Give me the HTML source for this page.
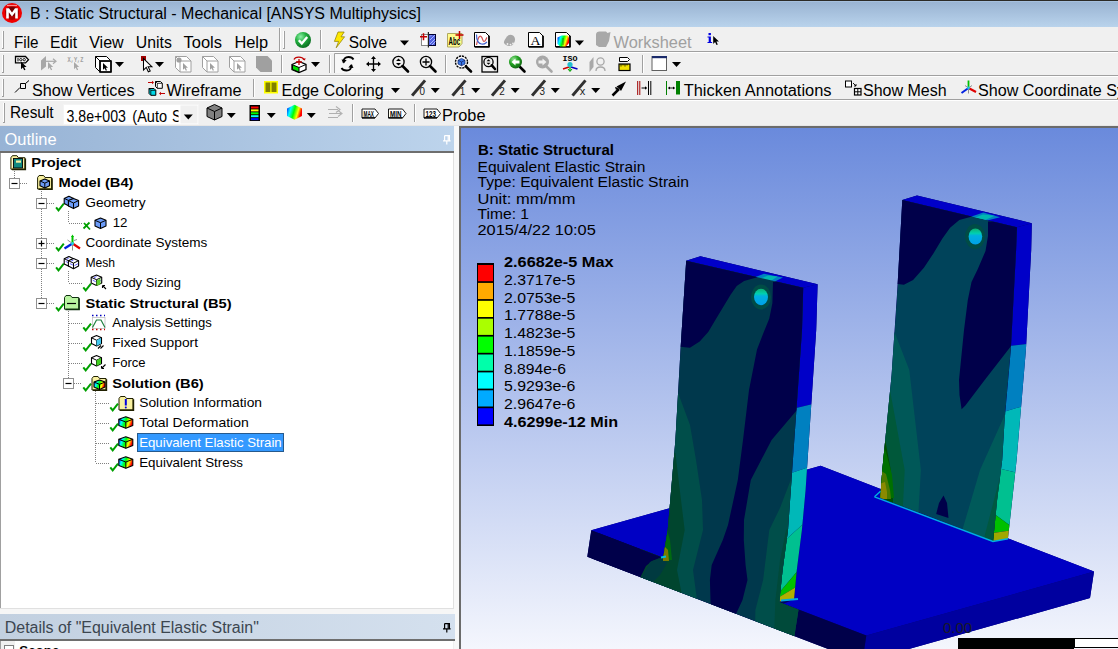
<!DOCTYPE html>
<html><head><meta charset="utf-8"><title>ANSYS Mechanical</title>
<style>html,body{margin:0;padding:0;width:1118px;height:649px;overflow:hidden;background:#f0f0f0}
svg{display:block;font-family:"Liberation Sans", sans-serif}</style></head>
<body><svg width="1118" height="649" viewBox="0 0 1118 649">
<defs>
<linearGradient id="gTitle" x1="0" y1="0" x2="0" y2="1">
 <stop offset="0" stop-color="#97b1d0"/><stop offset="1" stop-color="#b9d3ec"/></linearGradient>
<linearGradient id="gOut" x1="0" y1="0" x2="1" y2="0">
 <stop offset="0" stop-color="#97b3d5"/><stop offset="1" stop-color="#bdd4ec"/></linearGradient>
<linearGradient id="gDet" x1="0" y1="0" x2="1" y2="0">
 <stop offset="0" stop-color="#c2d0e0"/><stop offset="1" stop-color="#d4e0ee"/></linearGradient>
<linearGradient id="gView" x1="0" y1="0" x2="0" y2="1">
 <stop offset="0" stop-color="#6a8adc"/><stop offset="1" stop-color="#f4f6fd"/></linearGradient>
<clipPath id="cView"><rect x="461" y="128" width="657" height="521"/></clipPath>
<clipPath id="cCombo"><rect x="64" y="105" width="114.5" height="19"/></clipPath>
<clipPath id="cRight"><rect x="0" y="0" width="1118" height="649"/></clipPath>
</defs>
<rect x="0" y="0" width="1118" height="649" fill="#f0f0f0"/>
<rect x="0" y="0" width="1118" height="27" fill="url(#gTitle)"/>
<rect x="0" y="0" width="1118" height="1" fill="#2b2a26"/>
<rect x="0" y="1" width="1118" height="1" fill="#a6c0de"/>
<rect x="0" y="51" width="1118" height="1" fill="#a0a0a0"/>
<rect x="0" y="52" width="1118" height="1" fill="#ffffff"/>
<rect x="0" y="75" width="1118" height="1" fill="#a0a0a0"/>
<rect x="0" y="76" width="1118" height="1" fill="#ffffff"/>
<rect x="0" y="99" width="1118" height="1" fill="#a0a0a0"/>
<rect x="0" y="100" width="1118" height="1" fill="#ffffff"/>
<rect x="0" y="125" width="1118" height="1" fill="#e6e6e6"/>
<rect x="2" y="31" width="1" height="17" fill="#ffffff"/>
<rect x="3" y="31" width="1" height="17" fill="#a0a0a0"/>
<rect x="2" y="48" width="2" height="1" fill="#a0a0a0"/>
<rect x="283" y="31" width="1" height="17" fill="#ffffff"/>
<rect x="284" y="31" width="1" height="17" fill="#a0a0a0"/>
<rect x="283" y="48" width="2" height="1" fill="#a0a0a0"/>
<rect x="2" y="55" width="1" height="17" fill="#ffffff"/>
<rect x="3" y="55" width="1" height="17" fill="#a0a0a0"/>
<rect x="2" y="72" width="2" height="1" fill="#a0a0a0"/>
<rect x="281" y="55" width="1" height="17" fill="#ffffff"/>
<rect x="282" y="55" width="1" height="17" fill="#a0a0a0"/>
<rect x="281" y="72" width="2" height="1" fill="#a0a0a0"/>
<rect x="2" y="79" width="1" height="17" fill="#ffffff"/>
<rect x="3" y="79" width="1" height="17" fill="#a0a0a0"/>
<rect x="2" y="96" width="2" height="1" fill="#a0a0a0"/>
<rect x="3" y="103" width="1" height="19" fill="#ffffff"/>
<rect x="4" y="103" width="1" height="19" fill="#a0a0a0"/>
<rect x="3" y="122" width="2" height="1" fill="#a0a0a0"/>
<rect x="279" y="28" width="1" height="23" fill="#a0a0a0"/>
<rect x="280" y="28" width="1" height="23" fill="#ffffff"/>
<rect x="320" y="30" width="1" height="19" fill="#a0a0a0"/>
<rect x="321" y="30" width="1" height="19" fill="#ffffff"/>
<rect x="281" y="55" width="1" height="18" fill="#a0a0a0"/>
<rect x="282" y="55" width="1" height="18" fill="#ffffff"/>
<rect x="329" y="55" width="1" height="18" fill="#a0a0a0"/>
<rect x="330" y="55" width="1" height="18" fill="#ffffff"/>
<rect x="445" y="55" width="1" height="18" fill="#a0a0a0"/>
<rect x="446" y="55" width="1" height="18" fill="#ffffff"/>
<rect x="642" y="55" width="1" height="18" fill="#a0a0a0"/>
<rect x="643" y="55" width="1" height="18" fill="#ffffff"/>
<rect x="253" y="79" width="1" height="18" fill="#a0a0a0"/>
<rect x="254" y="79" width="1" height="18" fill="#ffffff"/>
<rect x="352" y="104" width="1" height="18" fill="#a0a0a0"/>
<rect x="353" y="104" width="1" height="18" fill="#ffffff"/>
<rect x="414" y="104" width="1" height="18" fill="#a0a0a0"/>
<rect x="415" y="104" width="1" height="18" fill="#ffffff"/>
<rect x="63.5" y="104.5" width="135" height="20" fill="#ffffff" stroke="#f4f4f4"/>
<rect x="180.5" y="105.5" width="17" height="18" fill="#f0f0f0"/>
<rect x="0" y="126" width="455" height="25" fill="url(#gOut)"/>
<rect x="0" y="151" width="455" height="2" fill="#6e6e6e"/>
<rect x="1" y="153" width="452" height="455" fill="#ffffff"/>
<rect x="0" y="153" width="1" height="456" fill="#a0a0a0"/>
<rect x="453" y="153" width="1" height="456" fill="#e0e0e0"/>
<rect x="0" y="608" width="454" height="1" fill="#e0e0e0"/><rect x="0" y="609" width="455" height="5" fill="#f6f6f6"/>
<rect x="454" y="126" width="5" height="523" fill="#f8f8f8"/>
<rect x="0" y="614" width="455" height="25" fill="url(#gDet)"/>
<rect x="0" y="639" width="455" height="2" fill="#6e6e6e"/>
<rect x="1" y="641" width="452" height="8" fill="#ffffff"/>
<rect x="0" y="641" width="1" height="8" fill="#a0a0a0"/>
<rect x="1" y="641" width="14" height="8" fill="#f0f0f0"/>
<rect x="4.5" y="645.5" width="9" height="9" fill="#fff" stroke="#808080"/>
<rect x="137" y="433" width="147" height="19" fill="#3399ff"/>
<rect x="137.5" y="433.5" width="146" height="18" fill="none" stroke="#1a1a1a" stroke-width="1" stroke-dasharray="1 1"/>
<rect x="459" y="126" width="659" height="523" fill="#6b6b6b"/>
<rect x="461" y="128" width="657" height="521" fill="url(#gView)"/>
<g clip-path="url(#cView)">
<polygon points="591.3,530.2 820.6,465.8 1094.0,571.6 1090.0,598.1 862.3,662.1 587.3,556.7" fill="#00007a"/>
<polygon points="591.3,530.2 820.6,465.8 1094.0,571.6 866.3,635.6" fill="#0000c4"/>
<polygon points="866.3,635.6 1094.0,571.6 1090.0,598.1 862.3,662.1" fill="#00009f"/>
<polygon points="591.3,530.2 866.3,635.6 862.3,662.1 587.3,556.7" fill="#00004a"/>
<defs><clipPath id="cLU"><polygon points="686.2,260.8 803.2,287.7 802.0,330.0 790.8,490.0 788.0,530.0 782.6,570.0 779.0,605.5 662.6,561.0 667.7,530.0 672.0,480.0 675.4,440.0 680.8,345.0"/><polygon points="591.3,530.2 866.3,635.6 862.3,662.1 587.3,556.7"/></clipPath>
<clipPath id="cRU"><polygon points="902.3,200.0 1017.0,227.3 1016.1,250.0 1012.9,310.0 1010.8,350.0 1004.6,420.0 1002.2,460.0 997.1,500.0 993.1,540.9 880.3,497.8 882.3,470.0 891.6,375.0 897.3,290.0"/></clipPath>
<linearGradient id="gHole" x1="0" y1="0" x2="0" y2="1"><stop offset="0" stop-color="#10b070"/><stop offset="0.3" stop-color="#00d0b0"/><stop offset="0.45" stop-color="#00b0e0"/><stop offset="1" stop-color="#00a0e8"/></linearGradient></defs>
<polygon points="686.2,260.8 700.4,256.2 817.6,284.2 816.2,330.0 805.6,490.0 801.9,530.0 796.8,570.0 794.0,599.5 779.0,605.5 662.6,561.0 667.7,530.0 672.0,480.0 675.4,440.0 680.8,345.0" fill="#000060"/>
<polygon points="686.2,260.8 700.4,256.2 817.6,284.2 803.2,287.7" fill="#0000c8"/>
<polygon points="754.2,277.6 764.0,273.8 783.0,277.4 772.7,282.4" fill="#0080c0"/>
<polygon points="760.4,278.6 768.0,275.6 777.5,276.4 770.0,281.4" fill="#00b8b0"/>
<defs><clipPath id="cLR"><polygon points="803.2,287.7 817.6,284.2 816.2,330.0 805.6,490.0 801.9,530.0 796.8,570.0 794.0,599.5 779.2,601.5 782.6,570.0 788.0,530.0 790.8,490.0 802.0,330.0"/></clipPath></defs>
<g clip-path="url(#cLR)">
<polygon points="770.0,270.0 830.0,270.0 830.0,399.8 770.0,414.2" fill="#0000c8"/>
<polygon points="770.0,414.2 830.0,399.8 830.0,460.0 770.0,480.0" fill="#0080c0"/>
<polygon points="770.0,480.0 830.0,460.0 830.0,499.7 770.0,553.8" fill="#00b8b8"/>
<polygon points="770.0,553.8 830.0,499.7 830.0,532.2 770.0,603.8" fill="#00c090"/>
<polygon points="770.0,603.8 830.0,532.2 830.0,566.7 770.0,602.6" fill="#00c000"/>
<polygon points="770.0,602.6 830.0,566.7 830.0,620.0 770.0,620.0" fill="#b0b000"/>
</g>
<g clip-path="url(#cLU)">
<polygon points="686.0,255.0 810.0,285.0 788.0,600.0 786.0,690.0 652.0,690.0 640.0,580.0 646.0,565.0 663.0,557.0" fill="#00384c"/>
<polygon points="680.0,255.0 762.0,275.0 756.4,277.4 744.1,281.1 736.7,286.0 730.6,294.7 723.2,307.0 715.8,319.3 708.4,331.7 699.7,341.5 689.9,347.7 682.5,347.0 660.0,345.0 660.0,255.0" fill="#00004a"/>
<polygon points="773.0,282.0 820.0,282.0 820.0,410.0 797.0,410.0 771.6,440.0 750.8,480.0 744.0,520.0 743.8,540.0 745.6,565.0 747.5,580.0 742.5,600.0 736.0,614.0 736.0,690.0 710.0,690.0 711.0,612.0 710.5,600.0 709.9,580.0 711.7,565.0 722.8,540.0 728.0,525.0 737.8,480.0 743.0,440.0 749.0,390.0 757.0,349.4 763.0,334.0 769.3,318.5 772.4,303.0" fill="#00004a"/>
<polygon points="640.0,380.0 678.5,394.0 690.0,425.0 696.0,460.0 702.0,500.0 703.0,530.0 693.0,570.0 697.0,600.0 695.0,690.0 640.0,690.0" fill="#004e4a"/>
<polygon points="640.0,440.0 675.4,453.0 681.0,500.0 684.7,530.0 677.0,570.0 683.0,600.0 680.0,690.0 640.0,690.0" fill="#00452e"/>
<polygon points="600.0,530.0 663.0,557.0 652.0,561.0 646.0,566.0 641.0,576.0 638.0,600.0 580.0,600.0" fill="#00004a"/>
<polygon points="650.0,562.0 662.0,557.0 667.0,563.0 660.0,575.0 652.0,583.0 646.0,590.0 640.0,580.0" fill="#003a40"/>
<polygon points="800.0,462.0 792.4,475.4 780.0,508.0 769.3,530.0 763.1,580.0 755.4,610.0 754.0,690.0 786.0,690.0 800.0,600.0" fill="#004e4a"/>
<polygon points="800.0,520.0 786.0,530.0 780.0,560.0 775.4,600.0 772.0,690.0 786.0,690.0 800.0,600.0" fill="#004a3a"/>
<polygon points="664.0,520.0 670.0,540.0 672.0,560.0 663.0,560.0" fill="#006a10"/>
<polygon points="663.0,545.0 668.0,550.0 669.0,561.0 663.0,561.0" fill="#7a7a00"/>
</g>
<ellipse cx="761" cy="297" rx="10" ry="12.5" fill="#004c46"/>
<ellipse cx="761" cy="297" rx="7" ry="8.3" fill="url(#gHole)"/>
<path d="M781 600.5l17-1.5" stroke="#00a8e0" stroke-width="2.2"/>
<path d="M661 557.5l5-1" stroke="#00c0e0" stroke-width="2"/>
<polygon points="902.3,200.0 917.0,195.4 1031.8,223.2 1031.2,250.0 1028.0,310.0 1025.9,350.0 1020.0,420.0 1016.6,460.0 1012.2,500.0 1007.9,539.0 993.1,540.9 880.3,497.8 882.3,470.0 891.6,375.0 897.3,290.0" fill="#000060"/>
<polygon points="902.3,200.0 917.0,195.4 1031.8,223.2 1017.0,227.3" fill="#0000c8"/>
<polygon points="969.2,217.2 983.4,212.6 1000.1,217.2 987.2,220.6" fill="#0080c0"/>
<polygon points="974.9,217.7 982.9,214.5 994.7,215.8 985.1,220.0" fill="#00b8b0"/>
<defs><clipPath id="cRR"><polygon points="1031.8,223.2 1031.2,250.0 1028.0,310.0 1025.9,350.0 1020.0,420.0 1016.6,460.0 1012.2,500.0 1007.9,539.0 993.1,540.9 997.1,500.0 1002.2,460.0 1004.6,420.0 1010.8,350.0 1012.9,310.0 1016.1,250.0 1017.0,227.3"/></clipPath></defs>
<g clip-path="url(#cRR)">
<polygon points="980.0,210.0 1040.0,210.0 1040.0,342.3 980.0,349.5" fill="#0000c8"/>
<polygon points="980.0,349.5 1040.0,342.3 1040.0,401.0 980.0,419.0" fill="#0080c0"/>
<polygon points="980.0,419.0 1040.0,401.0 1040.0,478.2 980.0,463.8" fill="#00b8b8"/>
<polygon points="980.0,463.8 1040.0,478.2 1040.0,547.4 980.0,503.6" fill="#00c090"/>
<polygon points="980.0,503.6 1015.9,529.8 980.0,534.8" fill="#00c000"/>
<polygon points="980.0,534.8 1040.0,526.4 1040.0,560.0 980.0,560.0" fill="#a0a800"/>
</g>
<g clip-path="url(#cRU)">
<polygon points="902.3,200.0 1017.0,227.3 1016.1,250.0 1012.9,310.0 1010.8,350.0 1004.6,420.0 1002.2,460.0 997.1,500.0 993.1,540.9 880.3,497.8 882.3,470.0 891.6,375.0 897.3,290.0" fill="#00435a"/>
<polygon points="895.0,190.0 980.0,214.0 973.2,216.2 959.3,220.0 950.1,227.7 942.4,238.5 933.1,253.9 923.9,267.8 913.1,280.1 903.9,284.7 897.7,284.0 880.0,284.0 880.0,190.0" fill="#00004a"/>
<polygon points="988.0,221.6 1030.0,221.0 1030.0,346.3 1010.9,346.3 984.7,380.0 965.4,405.4 961.6,409.3 959.5,395.0 959.0,380.0 964.0,330.0 967.8,300.0 971.5,282.0 977.8,269.0 985.5,251.0 988.0,236.0" fill="#00004a"/>
<polygon points="870.0,320.0 894.7,332.4 909.3,370.0 920.9,470.0 918.6,510.0 920.0,560.0 870.0,560.0" fill="#005858"/>
<polygon points="870.0,380.0 890.0,390.0 904.7,470.0 903.0,505.0 905.0,560.0 870.0,560.0" fill="#00583a"/>
<polygon points="870.0,430.0 885.4,440.9 890.8,470.0 893.0,500.0 893.0,560.0 870.0,560.0" fill="#005000"/>
<polygon points="880.0,440.0 886.0,452.0 892.0,475.0 894.0,498.0 880.0,498.0" fill="#007000"/>
<polygon points="880.0,470.0 886.0,474.0 890.0,490.0 891.0,499.0 880.0,499.0" fill="#4a7a00"/>
<polygon points="879.0,484.0 885.0,482.0 887.0,492.0 887.0,499.0 879.0,499.0" fill="#8a8a00"/>
<polygon points="1010.0,400.0 1006.3,411.6 980.0,470.0 963.0,527.8 960.0,560.0 1010.0,560.0" fill="#005a5a"/>
<polygon points="1010.0,470.0 1000.0,477.0 984.7,535.5 982.0,560.0 1010.0,560.0" fill="#005840"/>
<polygon points="996.0,515.0 1003.0,505.0 1000.0,545.0 992.0,545.0" fill="#006000"/>
<polygon points="943.5,495.5 947.0,503.0 948.5,518.0 936.2,514.0 939.0,503.0" fill="#00004a"/>
</g>
<ellipse cx="975" cy="236.5" rx="10" ry="12.5" fill="#004c46"/>
<ellipse cx="975.4" cy="236.5" rx="6.8" ry="8" fill="url(#gHole)"/>
<path d="M874.5 496.8L993 541.5l15-2.8" fill="none" stroke="#00b0e0" stroke-width="1.4"/>
<path d="M874.5 496.8l6-5.5" fill="none" stroke="#00b0e0" stroke-width="1.4"/>
</g>
<rect x="477" y="263" width="17" height="163" fill="#000"/>
<rect x="478" y="265.0" width="15" height="16.2" fill="#ff0000"/>
<rect x="478" y="282.9" width="15" height="16.2" fill="#ffaa00"/>
<rect x="478" y="300.8" width="15" height="16.2" fill="#ffff00"/>
<rect x="478" y="318.7" width="15" height="16.2" fill="#aaff00"/>
<rect x="478" y="336.6" width="15" height="16.2" fill="#00ff00"/>
<rect x="478" y="354.5" width="15" height="16.2" fill="#00ffaa"/>
<rect x="478" y="372.4" width="15" height="16.2" fill="#00ffff"/>
<rect x="478" y="390.3" width="15" height="16.2" fill="#00aaff"/>
<rect x="478" y="408.2" width="15" height="16.2" fill="#0000ff"/>
<rect x="958" y="638" width="116" height="11" fill="#000"/>
<rect x="1074.5" y="638.5" width="44" height="9" fill="#fff" stroke="#000"/>
<defs><radialGradient id="gM" cx="0.4" cy="0.35" r="0.7"><stop offset="0" stop-color="#ff5050"/><stop offset="0.6" stop-color="#e00000"/><stop offset="1" stop-color="#800000"/></radialGradient><radialGradient id="gChk" cx="0.35" cy="0.3" r="0.75"><stop offset="0" stop-color="#8ef0a8"/><stop offset="0.45" stop-color="#22b040"/><stop offset="1" stop-color="#0a6a20"/></radialGradient><radialGradient id="gBk" cx="0.35" cy="0.3" r="0.75"><stop offset="0" stop-color="#90e090"/><stop offset="0.5" stop-color="#20a020"/><stop offset="1" stop-color="#106010"/></radialGradient><linearGradient id="gRain" x1="0" y1="0" x2="1" y2="0.3"><stop offset="0" stop-color="#0000ff"/><stop offset="0.3" stop-color="#00ffff"/><stop offset="0.55" stop-color="#00ff00"/><stop offset="0.8" stop-color="#ffff00"/><stop offset="1" stop-color="#ff0000"/></linearGradient></defs>
<circle cx="12" cy="13" r="10" fill="#f00000"/><circle cx="12" cy="13" r="7" fill="#b00000"/><ellipse cx="12" cy="11.5" rx="6.5" ry="4.5" fill="#400000" opacity="0.55"/><path d="M7 5.5h10" stroke="#ffb0b0" stroke-width="1.2" opacity="0.8"/>
<path d="M6.2 18.5V8.2h2.8l3 4.2l3-4.2h2.8v10.3h-2.6v-6.2l-3.2 4.3l-3.2-4.3v6.2z" fill="#fff"/>
<circle cx="303" cy="40" r="8" fill="url(#gChk)"/>
<path d="M298.8 40.2l3 3.2l5.4-6.4" fill="none" stroke="#fff" stroke-width="2.4"/>
<path d="M338 32h6.2l-3.2 4.8h3.6l-8.4 11l2.4-6.4h-4.2z" fill="#ffe800" stroke="#8a7a00" stroke-width="0.7"/>
<path d="M400 40.5h9l-4.5 5z" fill="#000"/>
<rect x="421.5" y="34.5" width="7" height="11" fill="#fff" stroke="#888" stroke-width="1"/>
<rect x="428.5" y="34.5" width="7" height="11" fill="#5060e0" stroke="#000030" stroke-width="1"/>
<path d="M430 44l5-5M430 40l5-5M432 45l3.5-3.5M430 36.5l1.5-1.5" stroke="#a8b8ff" stroke-width="1"/>
<rect x="427.8" y="32" width="1.2" height="15.5" fill="#222"/>
<path d="M420 36.8h7M423.5 33.3v7" stroke="#c00000" stroke-width="1.5"/>
<path d="M447.5 33.5h14.5v10l-3 3.5h-11.5z" fill="#fffc8c" stroke="#b0a860" stroke-width="1"/>
<text x="448.6" y="45" font-size="11.5" font-weight="bold" fill="#000" textLength="11.5" lengthAdjust="spacingAndGlyphs">Abc</text>
<path d="M455.5 35h8M459.5 31v8" stroke="#c00000" stroke-width="1.5"/>
<path d="M474.5 32.5h11l3.5 3.5v11h-14.5z" fill="#fff" stroke="#000" stroke-width="1"/>
<path d="M475 46.8h14v-11" fill="none" stroke="#000" stroke-width="1.6"/>
<path d="M476.5 45c1-5 2.5-10 4.5-8.5s1.5 5 3 5s2-3 3-4" fill="none" stroke="#d05050" stroke-width="1.2"/>
<path d="M476.5 34.5c0 6 2 9 5 9.5s3.5-0.5 5.5-2" fill="none" stroke="#4060d0" stroke-width="1.2"/>
<path d="M507 36.5c1.5-2 4-2.5 6-1s2.5 4 1.5 6.5s-2.5 4-5 4s-5-1.5-5.5-3s1.5-4.5 3-6.5z" fill="#a8a8a8"/>
<circle cx="507.5" cy="44" r="0.9" fill="#f0f0f0"/><circle cx="510.5" cy="44.6" r="0.9" fill="#f0f0f0"/><circle cx="513" cy="43.5" r="0.9" fill="#f0f0f0"/>
<path d="M528.5 32.5h11l3.5 3.5v11h-14.5z" fill="#fff" stroke="#000" stroke-width="1"/>
<path d="M529 46.8h14v-11" fill="none" stroke="#000" stroke-width="1.6"/>
<text x="530.5" y="44.5" font-size="12" font-family="Liberation Serif, serif" fill="#000" textLength="10" lengthAdjust="spacingAndGlyphs">A</text>
<path d="M555.5 32.5h11l3.5 3.5v11h-14.5z" fill="#fff" stroke="#000" stroke-width="1"/>
<path d="M556 46.8h14v-11" fill="none" stroke="#000" stroke-width="1.6"/>
<path d="M557.5 37.5l4-2h6.5l1 2.5v5l-3 3.5h-6l-2.5-2.5z" fill="url(#gRain)"/>
<path d="M563 38v7" stroke="#333" stroke-width="0.6"/>
<path d="M575 40.5h9l-4.5 5z" fill="#000"/>
<path d="M596 34.5c0-2 1.5-3 3.5-3h6.5l1.5 1.5l3-1l-1.5 9l-3 6h-7l-3-2z" fill="#a8a8a8"/>
<rect x="708.5" y="33" width="2.4" height="2.2" fill="#0000e0"/><path d="M707.5 36.5h3.4v5.5h1.2v1h-4.6v-1h1.2v-4.5h-1.2z" fill="#0000e0"/>
<path transform="translate(713.2 36) scale(0.72)" d="M0 0V11L2.6 8.4L4.6 12.6L6.4 11.8L4.4 7.8H8Z" fill="#000"/>
<path d="M15.5 56.5h10l3 3.2l-3 3.2h-10z" fill="#fff" stroke="#000" stroke-width="1.3"/>
<path d="M18 58v3.4" stroke="#000" stroke-width="1"/><circle cx="20.8" cy="59.7" r="1.2" fill="none" stroke="#000" stroke-width="0.9"/><circle cx="24.2" cy="59.7" r="1.2" fill="none" stroke="#000" stroke-width="0.9"/>
<path transform="translate(21 61.5) scale(0.7)" d="M0 0V11L2.6 8.4L4.6 12.6L6.4 11.8L4.4 7.8H8Z" fill="#000"/>
<path d="M41 60.5l5-4.5v10.5l-5 4z" fill="#a8a8a8"/>
<path d="M46 61.3h9" stroke="#a8a8a8" stroke-width="1.2"/><path d="M53 58.8l3 2.5l-3 2.5" fill="none" stroke="#a8a8a8" stroke-width="1.2"/>
<path transform="translate(48 62) scale(0.65)" d="M0 0V11L2.6 8.4L4.6 12.6L6.4 11.8L4.4 7.8H8Z" fill="#a8a8a8"/>
<text x="67.5" y="61.8" font-size="7.5" font-weight="bold" font-family="Liberation Mono, monospace" fill="#a0a0a0" textLength="16" lengthAdjust="spacingAndGlyphs">X,Y,Z</text>
<path transform="translate(74 62) scale(0.65)" d="M0 0V11L2.6 8.4L4.6 12.6L6.4 11.8L4.4 7.8H8Z" fill="#a8a8a8"/>
<path d="M95.5 56.5h11l4.5 4.5v11h-11l-4.5-4.5z" fill="#fff" stroke="#000" stroke-width="1"/><path d="M95.5 56.5l4.5 4.5h11M100 61v11" fill="none" stroke="#000" stroke-width="1"/><path d="M100 61h11v11h-11z" fill="none" stroke="#000" stroke-width="1.6"/>
<path transform="translate(103 63) scale(0.62)" d="M0 0V11L2.6 8.4L4.6 12.6L6.4 11.8L4.4 7.8H8Z" fill="#000"/>
<path d="M115 62h9l-4.5 5z" fill="#000"/>
<rect x="141" y="56" width="5" height="5" fill="#a00000"/>
<path transform="translate(143.5 58.5) scale(1.05)" d="M0 0V11L2.6 8.4L4.6 12.6L6.4 11.8L4.4 7.8H8Z" fill="#fff" stroke="#000" stroke-width="1"/>
<path d="M155 62h9l-4.5 5z" fill="#000"/>
<path d="M175.5 56.5h11l4.5 4.5v11h-11l-4.5-4.5z" fill="#fff" stroke="#a0a0a0" stroke-width="1"/><path d="M175.5 56.5l4.5 4.5h11M180 61v11" fill="none" stroke="#a0a0a0" stroke-width="1"/><circle cx="179" cy="60" r="2.6" fill="#a0a0a0"/>
<path transform="translate(183 63) scale(0.62)" d="M0 0V11L2.6 8.4L4.6 12.6L6.4 11.8L4.4 7.8H8Z" fill="#a0a0a0"/>
<path d="M202.5 56.5h3l4.5 4.5h-3z" fill="#a0a0a0"/><path d="M202.5 56.5h11l4.5 4.5v11h-11l-4.5-4.5z" fill="#fff" stroke="#a0a0a0" stroke-width="1"/><path d="M202.5 56.5l4.5 4.5h11M207 61v11" fill="none" stroke="#a0a0a0" stroke-width="1"/>
<path transform="translate(210 63) scale(0.62)" d="M0 0V11L2.6 8.4L4.6 12.6L6.4 11.8L4.4 7.8H8Z" fill="#a0a0a0"/>
<path d="M229.5 56.5h11l4.5 4.5h-11z" fill="#a0a0a0"/><path d="M229.5 56.5h11l4.5 4.5v11h-11l-4.5-4.5z" fill="#fff" stroke="#a0a0a0" stroke-width="1"/><path d="M229.5 56.5l4.5 4.5h11M234 61v11" fill="none" stroke="#a0a0a0" stroke-width="1"/>
<path transform="translate(237 63) scale(0.62)" d="M0 0V11L2.6 8.4L4.6 12.6L6.4 11.8L4.4 7.8H8Z" fill="#a0a0a0"/>
<path d="M256 56h11.5l4.5 4.5v11.5h-11.5l-4.5-4.5z" fill="#a0a0a0"/>
<path d="M292 64.5l7-3l7 3v5l-7 3l-7-3z" fill="#fff" stroke="#000" stroke-width="1.3"/>
<path d="M292.5 64.8l6.5 2.7v4.6l-6.5-2.7z" fill="#00e000" stroke="#000" stroke-width="1"/>
<path d="M299 67.5l7-3" stroke="#000" stroke-width="1"/>
<path d="M294 59.5c1-3 8-3.5 10 0" fill="none" stroke="#c00000" stroke-width="1.2"/><path d="M302.5 59.5l2.5 1l0.5-2.5z" fill="#c00000"/>
<path d="M296 62h6M299 59v6" stroke="#c00000" stroke-width="1.3"/>
<path d="M311 62h9l-4.5 5z" fill="#000"/>
<rect x="334" y="53" width="26" height="20" fill="#f7f7f7"/>
<path d="M334.5 73V53.5H360" fill="none" stroke="#a0a0a0" stroke-width="1"/>
<path d="M343.5 62.5c-0.5-3.5 2-5.5 5-5.5s4.5 1.5 5 2.5" fill="none" stroke="#000" stroke-width="1.8"/><path d="M341.5 59.5l2.2 4l3-3.5z" fill="#000"/>
<path d="M351.5 65c0.5 3.5-2 5.5-5 5.5s-4.5-1.5-5-2.5" fill="none" stroke="#000" stroke-width="1.8"/><path d="M353.5 68l-2.2-4l-3 3.5z" fill="#000"/>
<path d="M373.5 57.5v13M367 64h13" stroke="#000" stroke-width="1.3"/>
<path d="M373.5 56l-2.5 3h5zM373.5 72l-2.5-3h5zM366 64l3-2.5v5zM381 64l-3-2.5v5z" fill="#000"/>
<circle cx="398.5" cy="62" r="5.6" fill="none" stroke="#000" stroke-width="1.3"/>
<line x1="402.532" y1="66.032" x2="408" y2="71.5" stroke="#000" stroke-width="2.6" stroke-linecap="round"/>
<path d="M398.5 58.5l-2.5 2.5h5zM398.5 65.5l-2.5-2.5h5z" fill="#000"/>
<circle cx="426" cy="62" r="5.6" fill="none" stroke="#000" stroke-width="1.3"/>
<line x1="430.032" y1="66.032" x2="435.5" y2="71.5" stroke="#000" stroke-width="2.6" stroke-linecap="round"/>
<path d="M426 58.5v7M422.5 62h7" stroke="#000" stroke-width="1.3"/>
<circle cx="461.5" cy="62" r="6" fill="#fff" stroke="#000" stroke-width="1.4" stroke-dasharray="2.2 0.9"/>
<line x1="465.8" y1="66.3" x2="471" y2="71.5" stroke="#000" stroke-width="2.6" stroke-linecap="round"/>
<path d="M458 60.2l3.5-1.8l3.5 1.8v3.8l-3.5 1.8l-3.5-1.8z" fill="#3a78e8" stroke="#102060" stroke-width="0.7"/><path d="M458 60.2l3.5 1.8l3.5-1.8M461.5 62v3.8" fill="none" stroke="#102060" stroke-width="0.7"/>
<rect x="482" y="56.5" width="15.5" height="15.5" fill="none" stroke="#000" stroke-width="1.3"/>
<circle cx="488.5" cy="62" r="4.6" fill="none" stroke="#000" stroke-width="1.3"/>
<line x1="491.812" y1="65.312" x2="495" y2="69" stroke="#000" stroke-width="2.6" stroke-linecap="round"/>
<path d="M488.5 59.2l-2 2h4zM488.5 64.8l-2-2h4z" fill="#000"/>
<line x1="520" y1="67" x2="524.5" y2="71.5" stroke="#000" stroke-width="2.6" stroke-linecap="round"/>
<circle cx="515.5" cy="62" r="6.5" fill="url(#gBk)"/>
<path d="M511.5 62l4-3.5v2h4v3h-4v2z" fill="#fff"/>
<line x1="547" y1="67" x2="551.5" y2="71.5" stroke="#a8a8a8" stroke-width="2.6" stroke-linecap="round"/>
<circle cx="542.5" cy="62" r="6.5" fill="#a8a8a8"/>
<path d="M546.5 62l-4-3.5v2h-4v3h4v2z" fill="#f0f0f0"/>
<text x="562.5" y="61" font-size="7" font-weight="bold" font-family="Liberation Mono, monospace" fill="#000" textLength="15" lengthAdjust="spacingAndGlyphs">ISO</text>
<path d="M570 65v6" stroke="#00a000" stroke-width="1.2"/><path d="M568 69l2 2.5l2-2.5" fill="none" stroke="#00a000" stroke-width="1"/>
<path d="M563 69l6-2" stroke="#d00000" stroke-width="1.5"/><path d="M571 67l6.5 2" stroke="#0000c0" stroke-width="1.5"/>
<circle cx="570" cy="64.5" r="2.6" fill="#20c0d0"/>
<path d="M589.5 62l4-5v10l-4 5z" fill="#a8a8a8"/>
<circle cx="600.5" cy="61.5" r="3.6" fill="none" stroke="#a8a8a8" stroke-width="1.3"/><path d="M596 71c0-3 2-4 4.5-4s4.5 1 4.5 4" fill="none" stroke="#a8a8a8" stroke-width="1.3"/>
<path d="M619.5 57.5h8l2 2l-2 2h-8z" fill="#fff" stroke="#000" stroke-width="1"/>
<rect x="619" y="64" width="11" height="6.5" fill="#f0e000" stroke="#000" stroke-width="1.2"/>
<path d="M621 64v2.5M623 64v1.5M625 64v2.5M627 64v1.5" stroke="#000" stroke-width="0.8"/>
<rect x="652" y="56.5" width="14.5" height="14" fill="#fff" stroke="#606060" stroke-width="1"/>
<rect x="652" y="56" width="15" height="2.2" fill="#1a2a6a"/>
<path d="M672 62h9l-4.5 5z" fill="#000"/>
<path d="M15 92.5l5-5M20.5 83.5h5v5h-5zM25.5 83.5l3.5-3" fill="none" stroke="#000" stroke-width="1"/>
<path d="M155.5 81.5h5l1.8 1.8v5h-5l-1.8-1.8z" fill="#fff" stroke="#000" stroke-width="1"/><path d="M155.5 81.5l1.8 1.8h5M157.3 83.3v5" fill="none" stroke="#000" stroke-width="0.8"/>
<path d="M149 88.5h5l1.8 1.8v5h-5l-1.8-1.8z" fill="#00d8e8" stroke="#000" stroke-width="1"/><path d="M149 88.5l1.8 1.8h5M150.8 90.3v5" fill="none" stroke="#000" stroke-width="0.8"/>
<path d="M148 82.5h5M160 93.5h5" stroke="#c00000" stroke-width="1"/><path d="M152 80.8l2 1.7l-2 1.7zM161 91.8l-2 1.7l2 1.7z" fill="#c00000"/>
<rect x="264" y="81" width="14" height="12.5" fill="#ffff00"/><rect x="265.5" y="82.5" width="4.8" height="9.5" fill="#808000"/><rect x="271.5" y="82.5" width="5" height="9.5" fill="#808000"/>
<path d="M391 88h9l-4.5 5z" fill="#000"/>
<path d="M413.1 94.5L424.1 81.5" stroke="#303030" stroke-width="3" stroke-linecap="square"/>
<text x="419.40000000000003" y="95" font-size="10.5" fill="#202020" textLength="5.5" lengthAdjust="spacingAndGlyphs">0</text>
<path d="M430.8 88h9l-4.5 5z" fill="#000"/>
<path d="M453.5 94.5L464.5 81.5" stroke="#303030" stroke-width="3" stroke-linecap="square"/>
<text x="459.8" y="95" font-size="10.5" fill="#202020" textLength="5.5" lengthAdjust="spacingAndGlyphs">1</text>
<path d="M471.2 88h9l-4.5 5z" fill="#000"/>
<path d="M493.0 94.5L504.0 81.5" stroke="#303030" stroke-width="3" stroke-linecap="square"/>
<text x="499.3" y="95" font-size="10.5" fill="#202020" textLength="5.5" lengthAdjust="spacingAndGlyphs">2</text>
<path d="M510.7 88h9l-4.5 5z" fill="#000"/>
<path d="M533.1 94.5L544.1 81.5" stroke="#303030" stroke-width="3" stroke-linecap="square"/>
<text x="539.4" y="95" font-size="10.5" fill="#202020" textLength="5.5" lengthAdjust="spacingAndGlyphs">3</text>
<path d="M550.8000000000001 88h9l-4.5 5z" fill="#000"/>
<path d="M573.5 94.5L584.5 81.5" stroke="#303030" stroke-width="3" stroke-linecap="square"/>
<text x="579.8" y="95" font-size="10.5" fill="#202020" textLength="5.5" lengthAdjust="spacingAndGlyphs">x</text>
<path d="M591.2 88h9l-4.5 5z" fill="#000"/>
<path d="M612.5 95.5l6.5-6.5" stroke="#000" stroke-width="2.5"/><path d="M616.5 86.5l9.5-5l-5 9.5l-2-2.5z" fill="#000"/><path d="M616 90l-1-3l4 1z" fill="#000"/>
<path d="M637.7 81v14M639.8 81v14" stroke="#a00000" stroke-width="1"/><path d="M648.5 81v14M650.8 81v14" stroke="#000" stroke-width="1"/>
<path d="M641.5 88h5" stroke="#000" stroke-width="1"/><path d="M645 86.3l2 1.7l-2 1.7z" fill="#000"/>
<path d="M666.5 81v14" stroke="#008000" stroke-width="1"/><rect x="676" y="81" width="4" height="13.5" fill="#008000"/>
<path d="M668.5 88h6" stroke="#000" stroke-width="0.9"/><path d="M668 88l2-1.6v3.2zM675 88l-2-1.6v3.2z" fill="#000"/>
<rect x="845.5" y="81" width="6" height="6" fill="#fff" stroke="#000" stroke-width="1"/><path d="M853 83l3 3M856 84v2h-2" fill="none" stroke="#000" stroke-width="0.9"/>
<rect x="854.5" y="88.5" width="6.5" height="6.5" fill="#fff" stroke="#000" stroke-width="1.2"/><path d="M857.8 88.5v6.5M854.5 91.8h6.5" stroke="#000" stroke-width="1"/>
<path d="M968.5 88l-7 5" stroke="#0020e0" stroke-width="2"/><path d="M968.5 88l7.5 4" stroke="#e00000" stroke-width="2"/><path d="M968.5 88v-7.5" stroke="#00c000" stroke-width="1.8"/>
<path d="M968.5 88l-3.5-2.5M968.5 88l3.5-2.5M968.5 88v5.5" stroke="#909090" stroke-width="1"/><circle cx="968.5" cy="88" r="1.4" fill="#20c0e0"/>
<path d="M183.8 114.6h9l-4.5 5z" fill="#000"/>
<path d="M207 108l7.5-3.5l7.5 3.5v8.5l-7.5 3.5l-7.5-3.5z" fill="#808080" stroke="#000" stroke-width="1"/><path d="M207 108l7.5 3.5l7.5-3.5M214.5 111.5v8.5" fill="none" stroke="#000" stroke-width="1"/>
<path d="M226.8 113h9l-4.5 5z" fill="#000"/>
<rect x="249.5" y="105" width="10.5" height="16" fill="#000"/>
<rect x="251" y="106.5" width="7.5" height="2" fill="#ff0000"/>
<rect x="251" y="109.4" width="7.5" height="2" fill="#ffff00"/>
<rect x="251" y="112.3" width="7.5" height="2" fill="#00ff00"/>
<rect x="251" y="115.2" width="7.5" height="2" fill="#00ffff"/>
<rect x="251" y="118.1" width="7.5" height="2" fill="#0000ff"/>
<path d="M266.8 113h9l-4.5 5z" fill="#000"/>
<path d="M287 108.5l7.5-3.8l7.5 3.8v7.5l-7.5 3.8l-7.5-3.8z" fill="url(#gRain)"/>
<path d="M306.8 113h9l-4.5 5z" fill="#000"/>
<path d="M328 109.5h10M329 113.5h12M328 117.5h10" stroke="#b0b0b0" stroke-width="1.2"/><path d="M336 106.5l4 3l-4 3M338 110.5l4 3l-4 3" fill="none" stroke="#b0b0b0" stroke-width="1.1"/>
<path d="M362.0 109.0h13l3.5 4.5l-3.5 4.5h-13z" fill="#fff" stroke="#000" stroke-width="0.9"/>
<path d="M362.0 117.8h13" stroke="#000" stroke-width="1.3"/>
<text x="363.5" y="116.7" font-size="9.5" font-weight="bold" font-family="Liberation Sans, sans-serif" fill="#000" textLength="10.5" lengthAdjust="spacingAndGlyphs">MAX</text>
<path d="M388.5 109.0h14l3.5 4.5l-3.5 4.5h-14z" fill="#fff" stroke="#000" stroke-width="0.9"/>
<path d="M388.5 117.8h14" stroke="#000" stroke-width="1.3"/>
<text x="390" y="116.7" font-size="9.5" font-weight="bold" font-family="Liberation Sans, sans-serif" fill="#000" textLength="11.5" lengthAdjust="spacingAndGlyphs">MIN</text>
<path d="M424.0 109.0h13l3.5 4.5l-3.5 4.5h-13z" fill="#fff" stroke="#000" stroke-width="0.9"/>
<path d="M424.0 117.8h13" stroke="#000" stroke-width="1.3"/>
<text x="425.5" y="116.7" font-size="9.5" font-weight="bold" font-family="Liberation Sans, sans-serif" fill="#000" textLength="10.5" lengthAdjust="spacingAndGlyphs">123</text>
<path d="M444.6 135.6h4.8v5M444.6 135.6v5M443 140.8h7.6M446.8 141v3.6" stroke="#fff" stroke-width="1.2" fill="none"/><rect x="447.6" y="136" width="1.2" height="4.6" fill="#fff"/>
<path d="M444.6 623.6h4.8v5M444.6 623.6v5M443 628.8h7.6M446.8 629v3.6" stroke="#000" stroke-width="1.2" fill="none"/><rect x="447.6" y="624" width="1.2" height="4.6" fill="#000"/>
<path d="M14.5 171V178" stroke="#808080" stroke-width="1" stroke-dasharray="1 1"/><path d="M41.5 191V298" stroke="#808080" stroke-width="1" stroke-dasharray="1 1"/><path d="M68.5 211V223" stroke="#808080" stroke-width="1" stroke-dasharray="1 1"/><path d="M68.5 271V283" stroke="#808080" stroke-width="1" stroke-dasharray="1 1"/><path d="M68.5 311V378" stroke="#808080" stroke-width="1" stroke-dasharray="1 1"/><path d="M95.5 391V463" stroke="#808080" stroke-width="1" stroke-dasharray="1 1"/><rect x="9.5" y="178.5" width="10" height="10" fill="#fff" stroke="#909090" stroke-width="1"/><path d="M11.5 183.5h6" stroke="#000" stroke-width="1.2"/><path d="M20 183.5H28" stroke="#808080" stroke-width="1" stroke-dasharray="1 1"/><rect x="36.5" y="198.5" width="10" height="10" fill="#fff" stroke="#909090" stroke-width="1"/><path d="M38.5 203.5h6" stroke="#000" stroke-width="1.2"/><path d="M47 203.5H55" stroke="#808080" stroke-width="1" stroke-dasharray="1 1"/><rect x="36.5" y="238.5" width="10" height="10" fill="#fff" stroke="#909090" stroke-width="1"/><path d="M38.5 243.5h6" stroke="#000" stroke-width="1.2"/><path d="M41.5 240.5v6" stroke="#000" stroke-width="1.2"/><path d="M47 243.5H55" stroke="#808080" stroke-width="1" stroke-dasharray="1 1"/><rect x="36.5" y="258.5" width="10" height="10" fill="#fff" stroke="#909090" stroke-width="1"/><path d="M38.5 263.5h6" stroke="#000" stroke-width="1.2"/><path d="M47 263.5H55" stroke="#808080" stroke-width="1" stroke-dasharray="1 1"/><rect x="36.5" y="298.5" width="10" height="10" fill="#fff" stroke="#909090" stroke-width="1"/><path d="M38.5 303.5h6" stroke="#000" stroke-width="1.2"/><path d="M47 303.5H55" stroke="#808080" stroke-width="1" stroke-dasharray="1 1"/><path d="M69 223.5H83" stroke="#808080" stroke-width="1" stroke-dasharray="1 1"/><path d="M69 283.5H83" stroke="#808080" stroke-width="1" stroke-dasharray="1 1"/><path d="M69 323.5H83" stroke="#808080" stroke-width="1" stroke-dasharray="1 1"/><path d="M69 343.5H83" stroke="#808080" stroke-width="1" stroke-dasharray="1 1"/><path d="M69 363.5H83" stroke="#808080" stroke-width="1" stroke-dasharray="1 1"/><rect x="63.5" y="378.5" width="10" height="10" fill="#fff" stroke="#909090" stroke-width="1"/><path d="M65.5 383.5h6" stroke="#000" stroke-width="1.2"/><path d="M74 383.5H82" stroke="#808080" stroke-width="1" stroke-dasharray="1 1"/><path d="M96 403.5H110" stroke="#808080" stroke-width="1" stroke-dasharray="1 1"/><path d="M96 423.5H110" stroke="#808080" stroke-width="1" stroke-dasharray="1 1"/><path d="M96 443.5H110" stroke="#808080" stroke-width="1" stroke-dasharray="1 1"/><path d="M96 463.5H110" stroke="#808080" stroke-width="1" stroke-dasharray="1 1"/><path d="M10.9 157.7l1.5-2h4.5l1.5 2h6.5v11.5h-14.0z" fill="#f8f0a0" stroke="#202000" stroke-width="1"/><path d="M11.9 169.5h13.5v-11.0" fill="none" stroke="#202000" stroke-width="1.4"/><rect x="13.5" y="158.5" width="9" height="9.5" fill="#108880" stroke="#000" stroke-width="0.9"/><rect x="16" y="160.5" width="5" height="2.2" fill="#f8f0a0"/><path d="M12.5 159.5v8" stroke="#fff" stroke-width="1" stroke-dasharray="1 1"/><path d="M37.6 177.5l1.5-2h4.5l1.5 2h6.5v11.5h-14.0z" fill="#f8f0a0" stroke="#202000" stroke-width="1"/><path d="M38.6 189.3h13.5v-11.0" fill="none" stroke="#202000" stroke-width="1.4"/><path d="M44.8 179.0L49.5 181.0L49.5 185.8L44.8 188.0L40.0 185.8L40.0 181.0Z" fill="#6c9cf8" stroke="#000" stroke-width="1.1" stroke-linejoin="round"/><path d="M40.0 181.0L44.8 183.1L49.5 181.0M44.8 183.1V188.0" fill="none" stroke="#000" stroke-width="0.9900000000000001"/><path d="M56.099999999999994 207.3l2.4 3l5.3-6.6" fill="none" stroke="#00a000" stroke-width="2"/><path d="M56.099999999999994 247.3l2.4 3l5.3-6.6" fill="none" stroke="#00a000" stroke-width="2"/><path d="M56.099999999999994 267.3l2.4 3l5.3-6.6" fill="none" stroke="#00a000" stroke-width="2"/><path d="M56.099999999999994 307.3l2.4 3l5.3-6.6" fill="none" stroke="#00a000" stroke-width="2"/><path d="M68.9 196.2L73.6 198.4L73.6 203.5L68.9 206.0L64.2 203.5L64.2 198.4Z" fill="#6c9cf8" stroke="#000" stroke-width="1.1" stroke-linejoin="round"/><path d="M64.2 198.4L68.9 200.6L73.6 198.4M68.9 200.6V206.0" fill="none" stroke="#000" stroke-width="0.9900000000000001"/><path d="M73.5 198.4L78.6 200.6L78.6 206.1L73.5 208.6L68.4 206.1L68.4 200.6Z" fill="#6c9cf8" stroke="#000" stroke-width="1.1" stroke-linejoin="round"/><path d="M68.4 200.6L73.5 203.0L78.6 200.6M73.5 203.0V208.6" fill="none" stroke="#000" stroke-width="0.9900000000000001"/><path d="M83.5 228.5l6-6M84 223l6 6.5" stroke="#00a000" stroke-width="1.8"/><path d="M100.5 218.0L106.0 220.3L106.0 225.9L100.5 228.5L95.0 225.9L95.0 220.3Z" fill="#6c9cf8" stroke="#000" stroke-width="1.1" stroke-linejoin="round"/><path d="M95.0 220.3L100.5 222.7L106.0 220.3M100.5 222.7V228.5" fill="none" stroke="#000" stroke-width="0.9900000000000001"/><path d="M72.5 243.5l-8 5" stroke="#0020e0" stroke-width="2.2"/><path d="M72.5 243.5l7.5 5" stroke="#e00000" stroke-width="2.2"/><path d="M72.5 243.5v-7.5" stroke="#00c000" stroke-width="2"/><path d="M72.5 234.5l-1.5 2.5h3z" fill="#00c000"/><path d="M72.5 243.5l-5-3.5M72.5 243.5v7M74 240.5l3-1" stroke="#909090" stroke-width="1"/><circle cx="72.5" cy="243.5" r="1.5" fill="#20d0e0"/><path d="M68.9 256.5L73.6 258.7L73.6 263.9L68.9 266.3L64.2 263.9L64.2 258.7Z" fill="#fff" stroke="#000" stroke-width="1.1" stroke-linejoin="round"/><path d="M64.2 258.7L68.9 260.9L73.6 258.7M68.9 260.9V266.3" fill="none" stroke="#000" stroke-width="0.9900000000000001"/><path d="M65.7 261.4l2.8 1.5M69.9 263.4l3.3 -2.0M68.9 258.0l-2.4 1.3" stroke="#4040ff" stroke-width="0.8"/><path d="M73.5 258.5L78.6 260.7L78.6 266.1L73.5 268.7L68.4 266.1L68.4 260.7Z" fill="#fff" stroke="#000" stroke-width="1.1" stroke-linejoin="round"/><path d="M68.4 260.7L73.5 263.1L78.6 260.7M73.5 263.1V268.7" fill="none" stroke="#000" stroke-width="0.9900000000000001"/><path d="M69.9 263.6l3.1 1.5M74.5 265.6l3.6 -2.0M73.5 260.0l-2.5 1.3" stroke="#4040ff" stroke-width="0.8"/><path d="M83.3 287.3l2.4 3l5.3-6.6" fill="none" stroke="#00a000" stroke-width="2"/><path d="M96.5 275.0L101.7 277.3L101.7 282.9L96.5 285.5L91.2 282.9L91.2 277.3Z" fill="#fff" stroke="#000" stroke-width="1.1" stroke-linejoin="round"/><path d="M91.2 277.3L96.5 279.7L101.7 277.3M96.5 279.7V285.5" fill="none" stroke="#000" stroke-width="0.9900000000000001"/><path d="M92.7 280.2l3.1 1.6M97.5 282.4l3.7 -2.1M96.5 276.5l-2.6 1.4" stroke="#4040ff" stroke-width="0.8"/><path d="M96.5 280.5l4-2v5.5l-4 2z" fill="#60d030"/><path d="M102.5 285.5l3.5 3.5M102.5 285.5h2.5M102.5 285.5v2.5" stroke="#000" stroke-width="1.1"/><path d="M64.5 297.5l1.5-2h4.5l1.5 2h6.699999999999999v11.7h-14.2z" fill="#b8f4a0" stroke="#103010" stroke-width="1"/><path d="M65.5 309.5h13.7v-11.2" fill="none" stroke="#103010" stroke-width="1.4"/><path d="M67 303.5h9" stroke="#000" stroke-width="1.2"/><path d="M83.3 327.3l2.4 3l5.3-6.6" fill="none" stroke="#00a000" stroke-width="2"/><path d="M83.3 347.3l2.4 3l5.3-6.6" fill="none" stroke="#00a000" stroke-width="2"/><path d="M83.3 367.3l2.4 3l5.3-6.6" fill="none" stroke="#00a000" stroke-width="2"/><path d="M83.3 387.3l2.4 3l5.3-6.6" fill="none" stroke="#00a000" stroke-width="2"/><rect x="92.5" y="317.5" width="12.5" height="11" fill="#fff" stroke="#c0c0c0" stroke-width="0.8"/><path d="M92.5 327.5l4-7.5h4.5l4 7.5" fill="none" stroke="#208040" stroke-width="1.2"/><path d="M92 315.5h13" stroke="#0000c0" stroke-width="1.3" stroke-dasharray="1.5 2.5"/><path d="M92 329.5h13" stroke="#c00000" stroke-width="1.3" stroke-dasharray="1.5 2.5"/><path d="M96.5 335.5L101.5 337.8L101.5 343.4L96.5 346.0L91.5 343.4L91.5 337.8Z" fill="#fff" stroke="#000" stroke-width="1.1" stroke-linejoin="round"/><path d="M91.5 337.8L96.5 340.2L101.5 337.8M96.5 340.2V346.0" fill="none" stroke="#000" stroke-width="0.9900000000000001"/><path d="M96.5 340.3l4.5-2.3v5.5l-4.5 2.5z" fill="#40c8f0"/><path d="M98 348.5l3-3M100.5 348.5l3-3" stroke="#000" stroke-width="1.1"/><path d="M96.5 355.5L101.5 357.8L101.5 363.4L96.5 366.0L91.5 363.4L91.5 357.8Z" fill="#fff" stroke="#000" stroke-width="1.1" stroke-linejoin="round"/><path d="M91.5 357.8L96.5 360.2L101.5 357.8M96.5 360.2V366.0" fill="none" stroke="#000" stroke-width="0.9900000000000001"/><path d="M96.5 360.3l4.5-2.3v5.5l-4.5 2.5z" fill="#40d020"/><path d="M101.5 368.5l4-4M101.5 368.5v-2.5M101.5 368.5h2.5" stroke="#000" stroke-width="1.1"/><path d="M92.0 378.5l1.5-2h4.5l1.5 2h6.5v11.5h-14.0z" fill="#f8f0a0" stroke="#202000" stroke-width="1"/><path d="M93.0 390.3h13.5v-11.0" fill="none" stroke="#202000" stroke-width="1.4"/><path d="M99.5 380.0L105.0 382.1L105.0 387.1L99.5 389.5L94.0 387.1L94.0 382.1Z" fill="url(#gRain)" stroke="#000" stroke-width="1.1" stroke-linejoin="round"/><path d="M94.0 382.1L99.5 384.3L105.0 382.1M99.5 384.3V389.5" fill="none" stroke="#000" stroke-width="0.9900000000000001"/><path d="M110.3 407.3l2.4 3l5.3-6.6" fill="none" stroke="#00a000" stroke-width="2"/><path d="M110.3 427.3l2.4 3l5.3-6.6" fill="none" stroke="#00a000" stroke-width="2"/><path d="M110.3 447.3l2.4 3l5.3-6.6" fill="none" stroke="#00a000" stroke-width="2"/><path d="M110.3 467.3l2.4 3l5.3-6.6" fill="none" stroke="#00a000" stroke-width="2"/><path d="M119.0 398.5l1.5-2h4.5l1.5 2h6.5v11.5h-14.0z" fill="#f8f0a0" stroke="#202000" stroke-width="1"/><path d="M120.0 410.3h13.5v-11.0" fill="none" stroke="#202000" stroke-width="1.4"/><path d="M125.8 399v6.5" stroke="#0000e0" stroke-width="2"/><circle cx="125.8" cy="407.5" r="1" fill="#0000e0"/><path d="M125.8 416.8L132.8 419.3L132.8 425.4L125.8 428.3L118.8 425.4L118.8 419.3Z" fill="url(#gRain)" stroke="#000" stroke-width="1.1" stroke-linejoin="round"/><path d="M118.8 419.3L125.8 422.0L132.8 419.3M125.8 422.0V428.3" fill="none" stroke="#000" stroke-width="0.9900000000000001"/><path d="M125.8 436.8L132.8 439.3L132.8 445.4L125.8 448.3L118.8 445.4L118.8 439.3Z" fill="url(#gRain)" stroke="#000" stroke-width="1.1" stroke-linejoin="round"/><path d="M118.8 439.3L125.8 442.0L132.8 439.3M125.8 442.0V448.3" fill="none" stroke="#000" stroke-width="0.9900000000000001"/><path d="M125.8 456.8L132.8 459.3L132.8 465.4L125.8 468.3L118.8 465.4L118.8 459.3Z" fill="url(#gRain)" stroke="#000" stroke-width="1.1" stroke-linejoin="round"/><path d="M118.8 459.3L125.8 462.0L132.8 459.3M125.8 462.0V468.3" fill="none" stroke="#000" stroke-width="0.9900000000000001"/>
<text x="30" y="19.4" font-size="16" font-weight="normal" fill="#000" textLength="391" lengthAdjust="spacingAndGlyphs">B : Static Structural - Mechanical [ANSYS Multiphysics]</text>
<text x="14" y="48.2" font-size="16" font-weight="normal" fill="#000" textLength="24.5" lengthAdjust="spacingAndGlyphs">File</text>
<text x="50" y="48.2" font-size="16" font-weight="normal" fill="#000" textLength="27" lengthAdjust="spacingAndGlyphs">Edit</text>
<text x="89.2" y="48.2" font-size="16" font-weight="normal" fill="#000" textLength="34.5" lengthAdjust="spacingAndGlyphs">View</text>
<text x="135.8" y="48.2" font-size="16" font-weight="normal" fill="#000" textLength="36" lengthAdjust="spacingAndGlyphs">Units</text>
<text x="183.6" y="48.2" font-size="16" font-weight="normal" fill="#000" textLength="38.4" lengthAdjust="spacingAndGlyphs">Tools</text>
<text x="234.4" y="48.2" font-size="16" font-weight="normal" fill="#000" textLength="33.6" lengthAdjust="spacingAndGlyphs">Help</text>
<text x="348.7" y="48.3" font-size="16" font-weight="normal" fill="#000" textLength="38.5" lengthAdjust="spacingAndGlyphs">Solve</text>
<text x="613.6" y="48.1" font-size="16" font-weight="normal" fill="#a0a0a0" textLength="78" lengthAdjust="spacingAndGlyphs">Worksheet</text>
<text x="32" y="95.6" font-size="16" font-weight="normal" fill="#000" textLength="102.5" lengthAdjust="spacingAndGlyphs">Show Vertices</text>
<text x="166.5" y="95.6" font-size="16" font-weight="normal" fill="#000" textLength="75" lengthAdjust="spacingAndGlyphs">Wireframe</text>
<text x="281.4" y="95.6" font-size="16" font-weight="normal" fill="#000" textLength="102.3" lengthAdjust="spacingAndGlyphs">Edge Coloring</text>
<text x="683.7" y="95.6" font-size="16" font-weight="normal" fill="#000" textLength="147.8" lengthAdjust="spacingAndGlyphs">Thicken Annotations</text>
<text x="863" y="95.6" font-size="16" font-weight="normal" fill="#000" textLength="83.7" lengthAdjust="spacingAndGlyphs">Show Mesh</text>
<text x="978" y="95.6" font-size="16" font-weight="normal" fill="#000" textLength="190" lengthAdjust="spacingAndGlyphs">Show Coordinate Systems</text>
<text x="10" y="118.1" font-size="16" font-weight="normal" fill="#000" textLength="43.6" lengthAdjust="spacingAndGlyphs">Result</text>
<text x="66.5" y="121.8" font-size="16" font-weight="normal" fill="#000" textLength="59.4" lengthAdjust="spacingAndGlyphs">3.8e+003</text>
<text x="132.3" y="121.8" font-size="16" font-weight="normal" fill="#000" textLength="34.7" lengthAdjust="spacingAndGlyphs">(Auto</text>
<text x="172" y="121.8" font-size="16" font-weight="normal" fill="#000" textLength="40" lengthAdjust="spacingAndGlyphs" clip-path="url(#cCombo)">Scale)</text>
<text x="442" y="121.4" font-size="16" font-weight="normal" fill="#000" textLength="43.5" lengthAdjust="spacingAndGlyphs">Probe</text>
<text x="4.6" y="144.9" font-size="16" font-weight="normal" fill="#fff" textLength="52" lengthAdjust="spacingAndGlyphs">Outline</text>
<text x="31.2" y="167.4" font-size="13" font-weight="bold" fill="#000" textLength="49.8" lengthAdjust="spacingAndGlyphs">Project</text>
<text x="58.4" y="187.4" font-size="13" font-weight="bold" fill="#000" textLength="75.1" lengthAdjust="spacingAndGlyphs">Model (B4)</text>
<text x="85.2" y="207.3" font-size="13" font-weight="normal" fill="#000" textLength="60.4" lengthAdjust="spacingAndGlyphs">Geometry</text>
<text x="112.7" y="227.3" font-size="13" font-weight="normal" fill="#000" textLength="14.8" lengthAdjust="spacingAndGlyphs">12</text>
<text x="85.4" y="247.3" font-size="13" font-weight="normal" fill="#000" textLength="121.9" lengthAdjust="spacingAndGlyphs">Coordinate Systems</text>
<text x="85.4" y="267.3" font-size="13" font-weight="normal" fill="#000" textLength="29.6" lengthAdjust="spacingAndGlyphs">Mesh</text>
<text x="112.6" y="287.3" font-size="13" font-weight="normal" fill="#000" textLength="68.3" lengthAdjust="spacingAndGlyphs">Body Sizing</text>
<text x="85.4" y="307.7" font-size="13" font-weight="bold" fill="#000" textLength="146.2" lengthAdjust="spacingAndGlyphs">Static Structural (B5)</text>
<text x="112.2" y="327.3" font-size="13" font-weight="normal" fill="#000" textLength="99.6" lengthAdjust="spacingAndGlyphs">Analysis Settings</text>
<text x="112.2" y="347.3" font-size="13" font-weight="normal" fill="#000" textLength="85.8" lengthAdjust="spacingAndGlyphs">Fixed Support</text>
<text x="112.2" y="367.3" font-size="13" font-weight="normal" fill="#000" textLength="33.4" lengthAdjust="spacingAndGlyphs">Force</text>
<text x="112.2" y="387.7" font-size="13" font-weight="bold" fill="#000" textLength="91.6" lengthAdjust="spacingAndGlyphs">Solution (B6)</text>
<text x="139.2" y="407.3" font-size="13" font-weight="normal" fill="#000" textLength="122.8" lengthAdjust="spacingAndGlyphs">Solution Information</text>
<text x="139.2" y="427.3" font-size="13" font-weight="normal" fill="#000" textLength="109.6" lengthAdjust="spacingAndGlyphs">Total Deformation</text>
<text x="139.2" y="447.3" font-size="13" font-weight="normal" fill="#fff" textLength="142.5" lengthAdjust="spacingAndGlyphs">Equivalent Elastic Strain</text>
<text x="139.2" y="467.3" font-size="13" font-weight="normal" fill="#000" textLength="103.8" lengthAdjust="spacingAndGlyphs">Equivalent Stress</text>
<text x="4.8" y="632.6" font-size="16" font-weight="normal" fill="#3c4650" textLength="254" lengthAdjust="spacingAndGlyphs">Details of &quot;Equivalent Elastic Strain&quot;</text>
<text x="477.9" y="155.4" font-size="14" font-weight="bold" fill="#000" textLength="136.1" lengthAdjust="spacingAndGlyphs">B: Static Structural</text>
<text x="477.5" y="171.5" font-size="14" font-weight="normal" fill="#000" textLength="167.8" lengthAdjust="spacingAndGlyphs">Equivalent Elastic Strain</text>
<text x="477.5" y="187.3" font-size="14" font-weight="normal" fill="#000" textLength="211.5" lengthAdjust="spacingAndGlyphs">Type: Equivalent Elastic Strain</text>
<text x="477.5" y="203.5" font-size="14" font-weight="normal" fill="#000" textLength="97.9" lengthAdjust="spacingAndGlyphs">Unit: mm/mm</text>
<text x="477.5" y="219.4" font-size="14" font-weight="normal" fill="#000" textLength="51.5" lengthAdjust="spacingAndGlyphs">Time: 1</text>
<text x="477.5" y="235.2" font-size="14" font-weight="normal" fill="#000" textLength="118.3" lengthAdjust="spacingAndGlyphs">2015/4/22 10:05</text>
<text x="504" y="267.3" font-size="14" font-weight="bold" fill="#000" textLength="109.5" lengthAdjust="spacingAndGlyphs">2.6682e-5 Max</text>
<text x="504" y="285.0" font-size="14" font-weight="normal" fill="#000" textLength="71.4" lengthAdjust="spacingAndGlyphs">2.3717e-5</text>
<text x="504" y="302.7" font-size="14" font-weight="normal" fill="#000" textLength="71.4" lengthAdjust="spacingAndGlyphs">2.0753e-5</text>
<text x="504" y="320.4" font-size="14" font-weight="normal" fill="#000" textLength="71.4" lengthAdjust="spacingAndGlyphs">1.7788e-5</text>
<text x="504" y="338.1" font-size="14" font-weight="normal" fill="#000" textLength="71.4" lengthAdjust="spacingAndGlyphs">1.4823e-5</text>
<text x="504" y="355.8" font-size="14" font-weight="normal" fill="#000" textLength="71.4" lengthAdjust="spacingAndGlyphs">1.1859e-5</text>
<text x="504" y="373.5" font-size="14" font-weight="normal" fill="#000" textLength="62" lengthAdjust="spacingAndGlyphs">8.894e-6</text>
<text x="504" y="391.2" font-size="14" font-weight="normal" fill="#000" textLength="71.4" lengthAdjust="spacingAndGlyphs">5.9293e-6</text>
<text x="504" y="408.9" font-size="14" font-weight="normal" fill="#000" textLength="71.4" lengthAdjust="spacingAndGlyphs">2.9647e-6</text>
<text x="504" y="426.6" font-size="14" font-weight="bold" fill="#000" textLength="114" lengthAdjust="spacingAndGlyphs">4.6299e-12 Min</text>
<text x="19.3" y="654.5" font-size="13" font-weight="bold" fill="#000" textLength="40" lengthAdjust="spacingAndGlyphs">Scope</text>
<text x="942.9" y="632.5" font-size="14" font-weight="normal" fill="#1a1a2a" textLength="29.3" lengthAdjust="spacingAndGlyphs">0.00</text>
</svg></body></html>
